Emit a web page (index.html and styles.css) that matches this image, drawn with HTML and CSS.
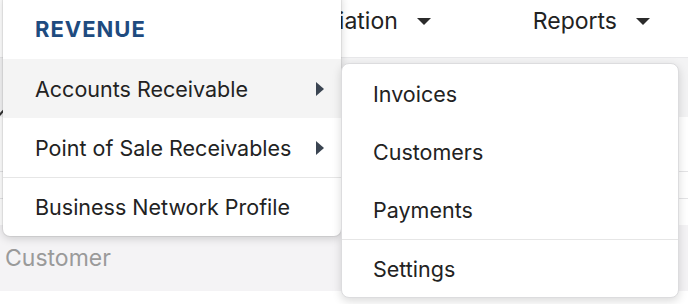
FILE: index.html
```html
<!DOCTYPE html>
<html lang="en">
<head>
    <meta charset="UTF-8">
    <meta name="viewport" content="width=device-width, initial-scale=1.0">
    <title>Revenue menu</title>
    <link rel="stylesheet" href="styles.css">
</head>
<body>

    <nav class="top-nav">
        <span class="nav-item">Reconciliation <span class="caret"></span></span>
        <span class="nav-item">Reports <span class="caret"></span></span>
    </nav>

    <div class="page">
        <div class="table-head"><span class="sort-mark"></span></div>
        <div class="table-row"></div>
        <div class="table-row short"></div>
        <div class="table-row spacer"></div>
        <div class="table-band">Customer</div>
    </div>

    <div class="menu">
        <div class="menu-title">REVENUE</div>
        <ul class="menu-list">
            <li class="menu-item active">Accounts Receivable <span class="arrow"></span></li>
            <li class="menu-item">Point of Sale Receivables <span class="arrow"></span></li>
            <li class="menu-item divided">Business Network Profile</li>
        </ul>
    </div>

    <div class="submenu">
        <ul class="menu-list">
            <li class="sub-item">Invoices</li>
            <li class="sub-item">Customers</li>
            <li class="sub-item">Payments</li>
            <li class="sub-item divided">Settings</li>
        </ul>
    </div>

</body>
</html>
```

FILE: styles.css
```css
* {
    box-sizing: border-box;
}

body {
    margin: 0;
    width: 688px;
    height: 304px;
    overflow: hidden;
    position: relative;
    background: #fff;
    font-family: Inter, "Liberation Sans", sans-serif;
    font-size: 21.5px;
    color: #222;
}

.top-nav {
    height: 58px;
    display: flex;
    justify-content: flex-end;
    align-items: flex-start;
    gap: 102px;
    padding: 7px 38px 0 0;
    border-bottom: 1px solid #e8e8ea;
    font-size: 23px;
}

.nav-item {
    display: flex;
    align-items: center;
    gap: 19px;
}

.caret {
    width: 0;
    height: 0;
    border-left: 7px solid transparent;
    border-right: 7px solid transparent;
    border-top: 7px solid #2b2b2b;
}

.table-head {
    height: 59px;
    background: #f3f3f4;
    position: relative;
}

.sort-mark {
    position: absolute;
    left: -4px;
    top: 48px;
    width: 8px;
    height: 8px;
    border-right: 2px solid #333;
    border-bottom: 2px solid #333;
    transform: rotate(45deg);
}

.table-row {
    height: 55px;
    border-bottom: 1px solid #e4e4e6;
}

.table-row.short {
    height: 27px;
}

.table-row.spacer {
    height: 26px;
    border-bottom: none;
}

.table-band {
    height: 66px;
    background: #f4f3f5;
    color: #9a9a9a;
    font-size: 23px;
    padding: 19px 0 0 5px;
}

.menu {
    position: absolute;
    left: 3px;
    top: -8px;
    width: 338px;
    background: #fff;
    border-radius: 7px;
    box-shadow: 0 2px 10px rgba(0, 0, 0, 0.18), 0 0 0 1px rgba(0, 0, 0, 0.06);
    overflow: hidden;
}

.menu-title {
    height: 67px;
    padding: 8px 0 2px 32px;
    display: flex;
    align-items: center;
    font-weight: 700;
    font-size: 22px;
    letter-spacing: 1px;
    color: #1e4b7f;
}

.menu-list {
    list-style: none;
    margin: 0;
    padding: 0;
}

.menu-item {
    height: 59px;
    display: flex;
    align-items: center;
    justify-content: space-between;
    padding: 0 17px 0 32px;
}

.menu-item.active {
    background: #f4f4f4;
}

.divided {
    border-top: 1px solid #e6e6e6;
}

.arrow {
    width: 0;
    height: 0;
    border-top: 7px solid transparent;
    border-bottom: 7px solid transparent;
    border-left: 8px solid #3a4451;
}

.submenu {
    position: absolute;
    left: 341px;
    top: 63px;
    width: 338px;
    height: 235px;
    background: #fff;
    border: 1px solid #dcdcde;
    border-radius: 8px;
    box-shadow: 0 3px 10px rgba(0, 0, 0, 0.15);
}

.sub-item {
    height: 58px;
    display: flex;
    align-items: center;
    padding-left: 31px;
}

.sub-item:first-child {
    height: 59px;
}
```
